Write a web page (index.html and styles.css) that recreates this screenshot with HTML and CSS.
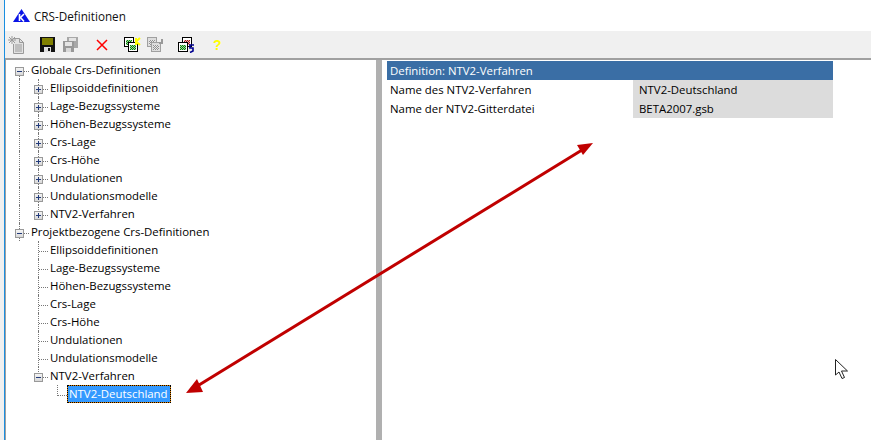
FILE: index.html
```html
<!DOCTYPE html>
<html lang="de">
<head>
<meta charset="utf-8">
<title>CRS-Definitionen</title>
<link rel="stylesheet" href="styles.css">
</head>
<body>
<div class="window">
  <header class="titlebar">
    <svg class="logo" width="17" height="14" viewBox="0 0 17 14"><path d="M8.500 0 L17 13 H0 Z" fill="#0a14e6"/><path d="M6.500 12V5M7 9l4-4M7.500 8.500l3.500 4" stroke="#fff" stroke-width="1.600" fill="none"/></svg>
    <span class="title">CRS-Definitionen</span>
  </header>
  <div class="toolbar">
    <svg class="ic i-doc" width="16" height="18" viewBox="0 0 16 18"><path d="M5.500 2.500H11.500L15.500 6.500V17.500H5.500V8" fill="#e2e2e2" stroke="#9a9a9a"/><path d="M11.500 2.500V6.500H15.500M7 9h7M7 11h7M7 13h7M7 15h7M1 1l6 6M1 7l6-6M4 0v8M0 4h8" stroke="#9a9a9a" fill="none"/></svg>
    <svg class="ic i-save" width="15" height="15" viewBox="0 0 15 15"><rect width="15" height="15" fill="#111"/><rect x="2" y="1" width="11" height="7" fill="#808000"/><rect x="4" y="10" width="7" height="5" fill="#ddd"/><rect x="8" y="11" width="2" height="3" fill="#111"/></svg>
    <svg class="ic i-saveall" width="15" height="15" viewBox="0 0 15 15"><rect x="4" width="11" height="11" fill="#a8a8a8"/><rect x="6" y="1" width="7" height="3" fill="#e4e4e4"/><rect y="4" width="11" height="11" fill="#989898"/><rect x="2" y="5" width="7" height="4" fill="#e4e4e4"/><rect x="3" y="11" width="5" height="4" fill="#d8d8d8"/></svg>
    <svg class="ic i-x" width="12" height="12" viewBox="0 0 12 12"><path d="M1 1l10 10M11 1L1 11" stroke="#f00" stroke-width="1.500"/></svg>
    <svg class="ic i-g1" width="17" height="15" viewBox="0 0 17 15"><defs><pattern id="gr" width="2" height="2" patternUnits="userSpaceOnUse"><rect width="2" height="2" fill="#9ed89e"/><rect width="1" height="1" fill="#0a800a"/><rect x="1" y="1" width="1" height="1" fill="#0a800a"/></pattern><pattern id="gy" width="2" height="2" patternUnits="userSpaceOnUse"><rect width="2" height="2" fill="#e8e8e8"/><rect width="1" height="1" fill="#909090"/><rect x="1" y="1" width="1" height="1" fill="#909090"/></pattern><pattern id="rd" width="2" height="2" patternUnits="userSpaceOnUse"><rect width="2" height="2" fill="#e8b0b0"/><rect width="1" height="1" fill="#a01818"/><rect x="1" y="1" width="1" height="1" fill="#a01818"/></pattern></defs><rect x=".5" y=".5" width="9" height="9" fill="#fff" stroke="#000"/><rect x="2" y="3" width="6" height="5" fill="url(#gr)"/><rect x="4.500" y="5.500" width="9" height="9" fill="#fff" stroke="#000"/><rect x="6" y="8" width="6" height="5" fill="url(#gr)"/><path d="M12 1v7M12 4.500l4-3.500M12 4.500l4 3.500" stroke="#ffff00" stroke-width="2" fill="none"/></svg>
    <svg class="ic i-g2" width="17" height="15" viewBox="0 0 17 15"><rect x=".5" y=".5" width="9" height="9" fill="#ddd" stroke="#a0a0a0"/><rect x="2" y="3" width="6" height="5" fill="url(#gy)"/><rect x="4.500" y="5.500" width="9" height="9" fill="#ddd" stroke="#a0a0a0"/><rect x="6" y="8" width="6" height="5" fill="url(#gy)"/><path d="M12 6h3V2" stroke="#999" stroke-width="2" fill="none"/></svg>
    <svg class="ic i-g3" width="17" height="16" viewBox="0 0 17 16"><rect x="4.500" y=".5" width="9" height="9" fill="#fff" stroke="#000"/><rect x="6" y="3" width="6" height="5" fill="url(#rd)"/><rect x=".5" y="5.500" width="9" height="9" fill="#fff" stroke="#000"/><rect x="2" y="8" width="6" height="5" fill="url(#gr)"/><path d="M16 8h-4v3h3v3l-3 1.500" stroke="#000090" stroke-width="1.600" fill="none"/></svg>
    <span class="help">?</span>
  </div>
  <main class="content">
    <nav class="tree">
      <div class="row"><i class="cell box minus root"></i><span class="label">Globale Crs-Definitionen</span></div>
      <div class="row"><i class="cell v"></i><i class="cell box plus t"></i><span class="label">Ellipsoiddefinitionen</span></div>
      <div class="row"><i class="cell v"></i><i class="cell box plus t"></i><span class="label">Lage-Bezugssysteme</span></div>
      <div class="row"><i class="cell v"></i><i class="cell box plus t"></i><span class="label">Höhen-Bezugssysteme</span></div>
      <div class="row"><i class="cell v"></i><i class="cell box plus t"></i><span class="label">Crs-Lage</span></div>
      <div class="row"><i class="cell v"></i><i class="cell box plus t"></i><span class="label">Crs-Höhe</span></div>
      <div class="row"><i class="cell v"></i><i class="cell box plus t"></i><span class="label">Undulationen</span></div>
      <div class="row"><i class="cell v"></i><i class="cell box plus t"></i><span class="label">Undulationsmodelle</span></div>
      <div class="row"><i class="cell v"></i><i class="cell box plus l"></i><span class="label">NTV2-Verfahren</span></div>
      <div class="row"><i class="cell box minus rootlast"></i><span class="label">Projektbezogene Crs-Definitionen</span></div>
      <div class="row"><i class="cell"></i><i class="cell t"></i><span class="label">Ellipsoiddefinitionen</span></div>
      <div class="row"><i class="cell"></i><i class="cell t"></i><span class="label">Lage-Bezugssysteme</span></div>
      <div class="row"><i class="cell"></i><i class="cell t"></i><span class="label">Höhen-Bezugssysteme</span></div>
      <div class="row"><i class="cell"></i><i class="cell t"></i><span class="label">Crs-Lage</span></div>
      <div class="row"><i class="cell"></i><i class="cell t"></i><span class="label">Crs-Höhe</span></div>
      <div class="row"><i class="cell"></i><i class="cell t"></i><span class="label">Undulationen</span></div>
      <div class="row"><i class="cell"></i><i class="cell t"></i><span class="label">Undulationsmodelle</span></div>
      <div class="row"><i class="cell"></i><i class="cell box minus l"></i><span class="label">NTV2-Verfahren</span></div>
      <div class="row"><i class="cell"></i><i class="cell"></i><i class="cell l"></i><span class="label selected">NTV2-Deutschland</span></div>
    </nav>
    <div class="splitter"></div>
    <section class="details">
      <div class="def-head">Definition: NTV2-Verfahren</div>
      <div class="def-row"><span class="def-name">Name des NTV2-Verfahren</span><span class="def-value">NTV2-Deutschland</span></div>
      <div class="def-row"><span class="def-name">Name der NTV2-Gitterdatei</span><span class="def-value">BETA2007.gsb</span></div>
    </section>
  </main>
</div>
<svg class="overlay" width="871" height="440" viewBox="0 0 871 440">
  <path d="M199 385 L582 150" stroke="#c00000" stroke-width="3" fill="none"/>
  <path d="M186 393 L197 379 L203 392 Z" fill="#c00000"/>
  <path d="M593 143 L577 145 L583 155 Z" fill="#c00000"/>
  <path d="M835.500 359.500 V375 L839 372 L842 378.500 L844.500 377.500 L841.500 371 H847.500 Z" fill="#fff" stroke="#222"/>
</svg>
</body>
</html>
```
FILE: styles.css
```css
html, body {
  margin: 0;
  height: 100%;
  overflow: hidden;
  background: #fff;
}
body {
  font-family: "Open Sans", "Noto Sans", sans-serif;
  font-size: 11.4px;
  color: #000;
  padding-left: 4px;
  background: #f0f0f0;
  box-sizing: border-box;
}
.window {
  height: 440px;
  display: flex;
  flex-direction: column;
  border-left: 1px solid #1a8ee0;
  background: #fff;
}
.titlebar {
  height: 31px;
  display: flex;
  align-items: center;
  padding-left: 8px;
  gap: 4px;
  background: #fff;
}
.logo { display: block; margin-top: 1px; }
.title { font-size: 11.7px; color: #111; }
.toolbar {
  height: 27px;
  display: flex;
  align-items: center;
  background: #f0f0f0;
  border-bottom: 2px solid #a0a0a0;
  box-sizing: content-box;
}
.ic { display: block; flex: none; }
.i-doc { margin-left: 3px; }
.i-save { margin-left: 16px; }
.i-saveall { margin-left: 8px; }
.i-x { margin-left: 18px; }
.i-g1 { margin-left: 16px; }
.i-g2 { margin-left: 6px; }
.i-g3 { margin-left: 14px; }
.help {
  margin-left: 18px;
  color: #ffff00;
  font: bold 14px "Liberation Sans", sans-serif;
}
.content {
  flex: 1;
  display: flex;
  min-height: 0;
}
.tree {
  width: 371px;
  flex: none;
  box-sizing: border-box;
  padding: 1px 0 0 4px;
  border-left: 1px solid #a0a0a0;
  overflow: hidden;
  isolation: isolate;
}
.row {
  height: 18px;
  display: flex;
  align-items: stretch;
}
.cell {
  width: 19px;
  flex: none;
  position: relative;
  display: block;
}
.v::before, .t::before, .l::before, .root::before, .rootlast::before {
  content: "";
  position: absolute;
  left: 9px;
  border-left: 1px dotted #777;
}
.v::before, .t::before { top: 0; bottom: 0; }
.l::before { top: 0; height: 11px; }
.root::before { top: 10px; bottom: 0; }
.rootlast::before { top: 0; bottom: 0; }
.t::after, .l::after {
  content: "";
  position: absolute;
  left: 10px;
  top: 10px;
  width: 9px;
  border-top: 1px dotted #777;
}
.box {
  background-repeat: no-repeat;
}
.box.minus {
  background-image:
    linear-gradient(#223a7a, #223a7a),
    linear-gradient(#f4f4f4, #d8d8d8),
    linear-gradient(#999, #999);
  background-size: 5px 1px, 7px 7px, 9px 9px;
  background-position: 7px 10px, 6px 7px, 5px 6px;
}
.box.plus {
  background-image:
    linear-gradient(#223a7a, #223a7a),
    linear-gradient(#223a7a, #223a7a),
    linear-gradient(#f4f4f4, #d8d8d8),
    linear-gradient(#999, #999);
  background-size: 5px 1px, 1px 5px, 7px 7px, 9px 9px;
  background-position: 7px 10px, 9px 8px, 6px 7px, 5px 6px;
}
.box.t::before, .box.l::before, .box.root::before, .box.rootlast::before {
  z-index: -1;
}
.box.t::after, .box.l::after, .root::after, .rootlast::after {
  content: "";
  position: absolute;
  left: 14px;
  top: 10px;
  width: 5px;
  border-top: 1px dotted #777;
}
.label {
  margin-left: 2px;
  padding: 0 1px 0 0;
  line-height: 18px;
  white-space: nowrap;
}
.selected {
  margin-left: 0;
  height: 18px;
  line-height: 16px;
  padding: 0 1px;
  width: 104px;
  box-sizing: border-box;
  color: #fff;
  border: 1px dotted #000;
  background:
    linear-gradient(#3399ff, #3399ff) padding-box,
    linear-gradient(#e08000, #e08000) border-box;
}
.splitter {
  width: 6px;
  flex: none;
  background: #b0b0b0;
}
.details {
  flex: none;
  width: 446px;
  margin-left: 5px;
  padding-top: 1px;
}
.def-head {
  height: 19px;
  line-height: 19px;
  padding-left: 3px;
  background: #3a6ea5;
  color: #fff;
}
.def-row {
  height: 19px;
  line-height: 19px;
  display: flex;
}
.def-name {
  width: 246px;
  flex: none;
  padding-left: 3px;
  box-sizing: border-box;
}
.def-value {
  flex: 1;
  padding-left: 6px;
  background: #dcdcdc;
}
.overlay {
  position: absolute;
  left: 0;
  top: 0;
  pointer-events: none;
}
```
